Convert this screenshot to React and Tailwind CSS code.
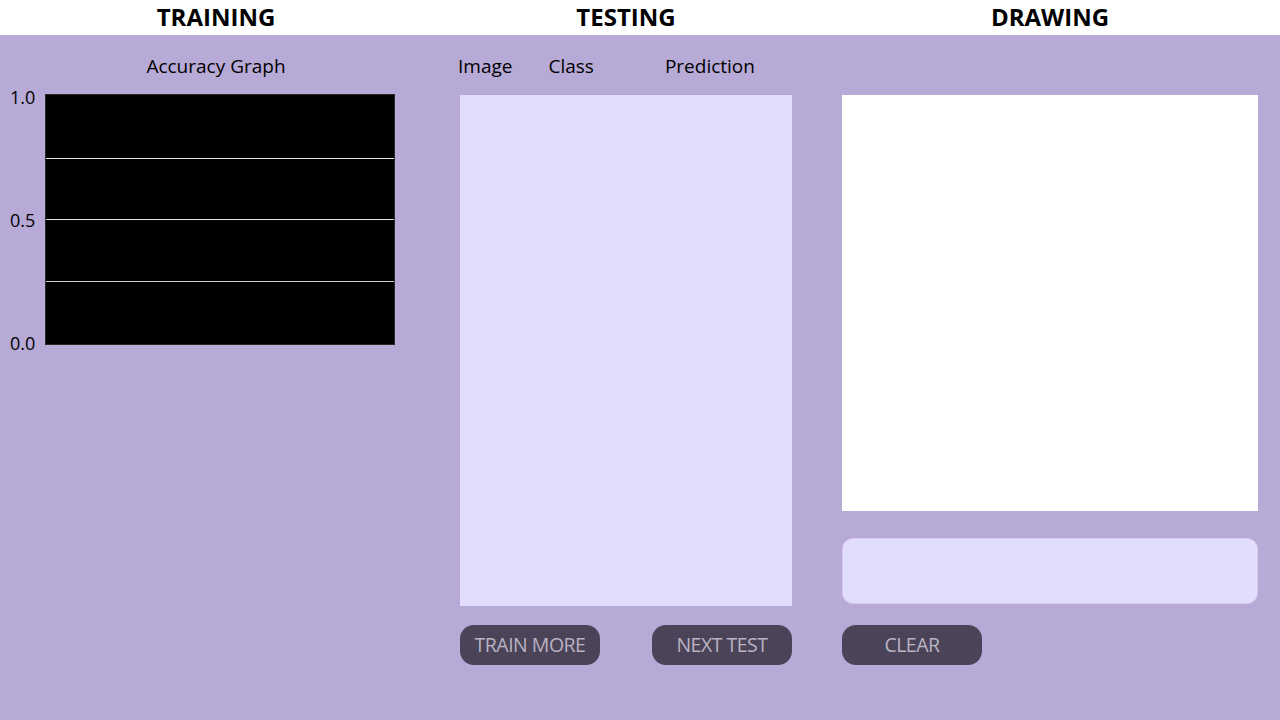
export default function App() {
  const font = { fontFamily: '"Open Sans", "Liberation Sans", sans-serif' };

  return (
    <div className="w-[1280px] h-[720px] flex flex-col text-black" style={font}>
      {/* section titles */}
      <header className="h-[35px] pb-[2px] bg-white flex items-center text-[24px] font-bold leading-none">
        <div className="w-[432px] text-center">TRAINING</div>
        <div className="w-[388px] text-center">TESTING</div>
        <div className="flex-1 text-center">DRAWING</div>
      </header>

      <main className="flex-1 bg-[#b7aad6] flex">
        {/* training */}
        <section className="w-[432px] pt-[17px] flex flex-col">
          <div className="h-[28px] leading-[28px] text-[19px] text-center">Accuracy Graph</div>
          <div className="mt-[14px] flex pl-[10px]">
            <div className="relative w-[35px] h-[251px] text-[18px] leading-none">
              <span className="absolute left-0 top-[-6px]">1.0</span>
              <span className="absolute left-0 top-[117px]">0.5</span>
              <span className="absolute left-0 top-[240px]">0.0</span>
            </div>
            <div className="relative w-[350px] h-[251px] bg-black border border-[#2a2a2a]">
              <div className="absolute left-0 right-0 top-[63px] h-px bg-[#e8e8e8]" />
              <div className="absolute left-0 right-0 top-[124px] h-px bg-[#e8e8e8]" />
              <div className="absolute left-0 right-0 top-[186px] h-px bg-[#cfcfcf]" />
            </div>
          </div>
        </section>

        {/* testing */}
        <section className="w-[388px] pt-[17px] pl-[28px] flex flex-col">
          <div className="h-[28px] leading-[28px] text-[19px] flex">
            <span className="-ml-[2px]">Image</span>
            <span className="ml-[36px]">Class</span>
            <span className="ml-[71px]">Prediction</span>
          </div>
          <div className="mt-[15px] w-[332px] h-[511px] bg-[#e3ddfd]" />
          <div className="mt-[19px] w-[332px] flex justify-between">
            <Button>TRAIN MORE</Button>
            <Button>NEXT TEST</Button>
          </div>
        </section>

        {/* drawing */}
        <section className="flex-1 pt-[17px] pl-[22px] flex flex-col">
          <div className="h-[28px]" />
          <div className="mt-[15px] w-[416px] h-[416px] bg-white" />
          <div className="mt-[27px] w-[416px] h-[66px] rounded-[11px] bg-[#e3ddfd] border border-[#d6cdf0]" />
          <div className="mt-[21px]">
            <Button>CLEAR</Button>
          </div>
        </section>
      </main>
    </div>
  );
}

function Button({ children }) {
  return (
    <button
      type="button"
      className="w-[140px] h-[40px] rounded-[14px] bg-[#4b4458] text-[#b9b3c3] text-[19.5px] tracking-[-0.5px] leading-none flex items-center justify-center"
    >
      {children}
    </button>
  );
}
